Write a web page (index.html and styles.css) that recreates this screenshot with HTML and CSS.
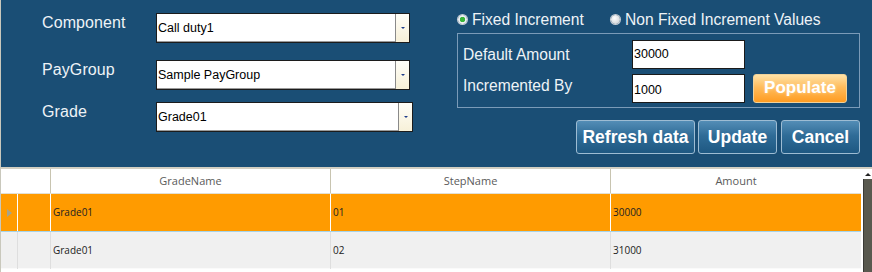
FILE: index.html
```html
<!DOCTYPE html>
<html>
<head>
  <meta name="viewport" content="width=device-width, initial-scale=1.0">
  <title>Pay Steps</title>
  <link rel="stylesheet" href="styles.css">
</head>
<body>
  <div class="window">
    <div class="panel">
      <div class="fields">
        <div class="field first">
          <label>Component</label>
          <div class="combo"><span class="combo-text">Call duty1</span><span class="combo-btn"></span></div>
        </div>
        <div class="field second">
          <label>PayGroup</label>
          <div class="combo"><span class="combo-text">Sample PayGroup</span><span class="combo-btn"></span></div>
        </div>
        <div class="field">
          <label>Grade</label>
          <div class="combo wide"><span class="combo-text">Grade01</span><span class="combo-btn"></span></div>
        </div>
      </div>

      <div class="side">
        <div class="radios">
          <div class="radio-item fixed"><span class="radio checked"></span>Fixed Increment</div>
          <div class="radio-item"><span class="radio"></span>Non Fixed Increment Values</div>
        </div>
        <div class="group">
          <div class="grow">
            <span class="glabel">Default Amount</span>
            <div class="tbox">30000</div>
          </div>
          <div class="grow second">
            <span class="glabel up">Incremented By</span>
            <div class="tbox">1000</div>
            <button class="populate">Populate</button>
          </div>
        </div>
        <div class="actions">
          <button class="btn refresh">Refresh data</button>
          <button class="btn">Update</button>
          <button class="btn">Cancel</button>
        </div>
      </div>
    </div>

    <div class="grid">
      <div class="table">
        <div class="head">
          <div class="hcell corner"></div>
          <div class="hcell">GradeName</div>
          <div class="hcell">StepName</div>
          <div class="hcell">Amount</div>
        </div>
        <div class="row selected">
          <div class="rowhead"><span class="arrow"></span></div>
          <div class="cell"></div>
          <div class="cell">Grade01</div>
          <div class="cell">01</div>
          <div class="cell">30000</div>
        </div>
        <div class="row">
          <div class="rowhead"></div>
          <div class="cell"></div>
          <div class="cell">Grade01</div>
          <div class="cell">02</div>
          <div class="cell">31000</div>
        </div>
      </div>
      <div class="scroll">
        <div class="scroll-up"><span></span></div>
        <div class="thumb"></div>
      </div>
    </div>
  </div>
</body>
</html>
```

FILE: styles.css
```css
/* page frame */
body {
  margin: 0;
  background: #fff;
  font-family: "Liberation Sans", Arial, sans-serif;
}
.window {
  width: 872px;
  height: 272px;
  overflow: hidden;
  border-left: 1px solid #c9c8bc;
  box-sizing: border-box;
}

/* top blue panel */
.panel {
  display: flex;
  height: 169px;
  box-sizing: border-box;
  background: #1a4e75;
  color: #eef3f7;
  border-bottom: 2px solid #d2cfc2;
}
.fields {
  padding: 13px 0 0 41px;
}
.field {
  display: flex;
  align-items: flex-start;
}
.field.first {
  margin-bottom: 17px;
}
.field.second {
  margin-bottom: 12px;
}
.field label {
  width: 114px;
  padding-top: 1px;
  font-size: 16px;
  letter-spacing: 0.1px;
}
.combo {
  display: flex;
  width: 254px;
  height: 30px;
  box-sizing: border-box;
  background: #fff;
  border: 1px solid #1c1c1c;
  box-shadow: inset 0 -1px 0 #9a9a9a;
}
.combo.wide {
  width: 257px;
}
.combo-text {
  flex: 1;
  padding-left: 1px;
  color: #000;
  font-size: 12.5px;
  line-height: 28px;
}
.combo-btn {
  width: 13px;
  border-left: 1px solid #8a8a8a;
  background: linear-gradient(#fffef8, #f7f0d8);
  display: flex;
  align-items: center;
  justify-content: center;
}
.combo-btn::after {
  content: "";
  border-left: 2px solid transparent;
  border-right: 2px solid transparent;
  border-top: 2px solid #1f3c8a;
}

/* right side */
.side {
  margin-left: 44px;
  width: 403px;
  padding-top: 9px;
}
.radios {
  display: flex;
  align-items: center;
  height: 21px;
  margin-bottom: 3px;
  padding-left: 1px;
  font-size: 15.6px;
}
.radio-item {
  display: flex;
  align-items: center;
}
.radio-item.fixed {
  width: 153px;
}
.radio {
  width: 9px;
  height: 9px;
  margin-right: 5px;
  border-radius: 50%;
  background: radial-gradient(circle at 40% 35%, #ffffff, #d6d9dc 70%);
  box-shadow: 0 0 0 1px #c4ccd4;
}
.radio.checked {
  background: radial-gradient(circle, #3ab53a 0 2.5px, #eef0f2 3px);
}

.group {
  height: 75px;
  box-sizing: border-box;
  border: 1px solid #7b9bb8;
  padding: 6px 0 0 5px;
  font-size: 15.6px;
}
.grow {
  display: flex;
  align-items: center;
  height: 29px;
}
.grow.second {
  margin-top: 5px;
}
.glabel {
  width: 169px;
}
.glabel.up {
  padding-bottom: 6px;
}
.tbox {
  width: 113px;
  height: 29px;
  box-sizing: border-box;
  background: #fff;
  border: 1px solid #1a1a1a;
  color: #000;
  font-size: 12.5px;
  padding: 6px 0 0 1px;
}
.grow.second .tbox {
  padding-top: 8px;
}
.populate {
  margin-left: 8px;
  width: 94px;
  height: 29px;
  border: 1px solid #f0d29a;
  border-radius: 3px;
  background: linear-gradient(#ffe2a6, #ffbc5c 45%, #ff9c22);
  color: #fff;
  font-family: "Liberation Sans", Arial, sans-serif;
  font-size: 17px;
  font-weight: bold;
  text-shadow: 0 0 3px #ffd89a;
  padding: 0 0 2px;
}

.actions {
  display: flex;
  justify-content: flex-end;
  gap: 4px;
  margin-top: 12px;
}
.btn {
  width: 79px;
  height: 34px;
  padding: 0;
  border: 1px solid #9dbcd3;
  border-radius: 3px;
  background: linear-gradient(#538db6, #2f6c97 45%, #1e5882);
  color: #fff;
  font-family: "Liberation Sans", Arial, sans-serif;
  font-size: 17.5px;
  font-weight: bold;
}
.btn.refresh {
  width: 119px;
  margin-right: -1px;
}

/* data grid */
.grid {
  display: flex;
  height: 103px;
}
.table {
  width: 860px;
  font-family: "Open Sans", sans-serif;
}
.head,
.row {
  display: grid;
  grid-template-columns: 16px 33px 280px 280px 251px;
}
.head {
  height: 25px;
  box-sizing: border-box;
  background: #fff;
  border-bottom: 1px solid #e2e0d4;
}
.hcell {
  border-left: 1px solid #c8c4b0;
  text-align: center;
  font-size: 11px;
  line-height: 24px;
  color: #5a5a5a;
}
.hcell.corner {
  grid-column: span 2;
  border-left: none;
}
.row {
  height: 37px;
  box-sizing: border-box;
  background: #f0f0f0;
  border-bottom: 1px solid #fafafa;
}
.row.selected {
  height: 38px;
  background: #ff9b00;
  border-bottom: 1px solid #a6d4ea;
}
.rowhead {
  display: flex;
  align-items: center;
  padding-left: 6px;
}
.arrow {
  border-left: 5px solid #a8a38a;
  border-top: 4px solid transparent;
  border-bottom: 4px solid transparent;
}
.cell {
  border-left: 1px solid #dedede;
  padding-left: 2px;
  font-size: 10px;
  line-height: 37px;
  color: #222;
}
.row.selected .cell {
  border-left-color: #fff;
}

.scroll {
  width: 11px;
  display: flex;
  flex-direction: column;
  background: #fff;
}
.scroll-up {
  height: 10px;
  display: flex;
  align-items: center;
  justify-content: center;
  padding-left: 2px;
}
.scroll-up span {
  border-left: 3px solid transparent;
  border-right: 3px solid transparent;
  border-bottom: 3px solid #222;
}
.thumb {
  flex: 1;
  margin-left: 2px;
  background: #59594f;
  border-left: 1px solid #3a3a36;
}
```
